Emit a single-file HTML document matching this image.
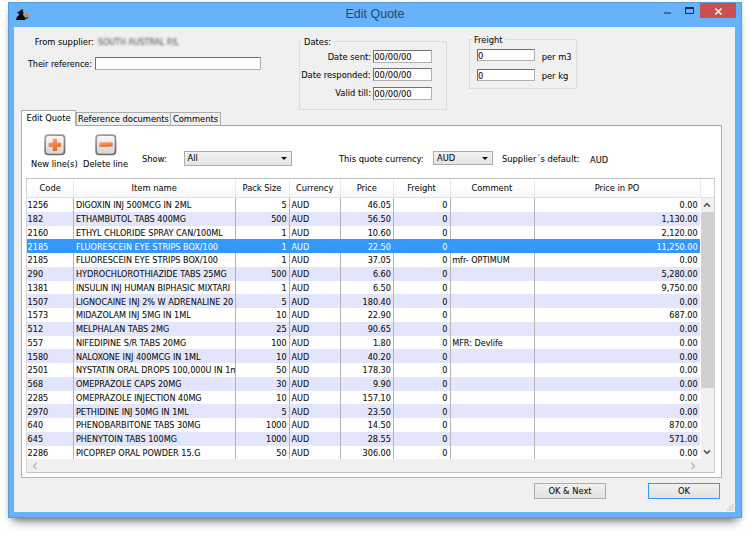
<!DOCTYPE html>
<html><head><meta charset="utf-8"><title>Edit Quote</title>
<style>
html,body{margin:0;padding:0;background:#fff;}
body{width:750px;height:533px;position:relative;overflow:hidden;font-family:"DejaVu Sans Condensed","DejaVu Sans","Liberation Sans",sans-serif;font-stretch:condensed;font-size:9.25px;color:#161616;text-shadow:0 0 0.5px rgba(20,20,20,.3);}
.abs{position:absolute;}
#shadow{position:absolute;left:8px;top:1.5px;width:734px;height:516.8px;box-shadow:0 8px 9px -5px rgba(0,0,0,.55),0 1px 5px rgba(0,0,0,.10);}
#win{position:absolute;left:8px;top:1.5px;width:734px;height:516.8px;background:#66b3fb;box-sizing:border-box;border:1px solid #5a9bd8;}
#title{text-shadow:none;position:absolute;left:8px;top:7.1px;width:734px;text-align:center;font-size:12.5px;line-height:15px;color:#27466b;font-family:"Liberation Sans",sans-serif;font-stretch:normal;}
#client{position:absolute;left:14.2px;top:26.5px;width:721.1px;height:485.8px;background:#f0f0f0;}
.lbl{position:absolute;white-space:nowrap;line-height:12px;}
.r{text-align:right;}
.inp{position:absolute;background:#fff;border:1px solid #b0b0b0;border-top-color:#707070;border-left-color:#707070;box-sizing:border-box;font-size:9.25px;line-height:12.4px;padding-left:0.3px;white-space:nowrap;overflow:hidden;}
.grp{position:absolute;border:1px solid #dcdcdc;box-sizing:border-box;}
.grp b{position:absolute;font-weight:normal;background:#f0f0f0;padding:0 2px;line-height:12px;white-space:nowrap;}
.tab{position:absolute;box-sizing:border-box;border:1px solid #acacac;border-bottom:none;background:#f0f0f0;text-align:center;white-space:nowrap;line-height:11px;}
.tab.act{background:#fff;z-index:3;}
#panel{position:absolute;left:21px;top:125.2px;width:701.3px;height:352.8px;background:#fff;border:1px solid #b2b2b2;border-top-color:#a4a4a4;box-sizing:border-box;}
.dd{position:absolute;box-sizing:border-box;border:1px solid #acacac;background:linear-gradient(#f2f2f2,#e4e4e4);line-height:12px;padding-left:4px;white-space:nowrap;}
.dd:after{content:"";position:absolute;right:3.8px;top:5px;border:3px solid transparent;border-top:3.4px solid #111;border-bottom:none;}
.ibtn{position:absolute;width:21px;height:21px;box-sizing:border-box;border:1.5px solid #8c8c8c;border-radius:3.5px;background:linear-gradient(#fbfbfb,#d9d9d9);}
#tbl{position:absolute;left:26px;top:177.6px;width:688.5px;height:295.5px;box-sizing:border-box;border:1px solid #c4c4c4;border-left-color:#d6d6d6;border-right-color:#d0d0d0;background:#fff;overflow:hidden;}
#thead{position:absolute;left:0;top:0;width:673px;height:19px;background:linear-gradient(#fff 40%,#f6f7f9);}
.h{position:absolute;top:3.4px;text-align:center;line-height:12px;white-space:nowrap;color:#222;}
.hs{position:absolute;top:0;width:1px;height:19px;background:#e3eaf3;}
.vs{position:absolute;top:19px;width:1px;height:261.4px;background:#b4b4b4;z-index:2;}
.row{position:absolute;left:0;width:673px;height:13.75px;}
.row.alt{background:#e3e5fc;}
.row.sel{background:#3397fb;color:#fff;z-index:3;text-shadow:0 0 0.5px rgba(255,255,255,.15);}
.c{position:absolute;top:1.1px;font-size:9px;line-height:13.75px;white-space:nowrap;overflow:hidden;box-sizing:border-box;padding:0 2.4px 0 2.5px;}
.c.l{text-align:left;}
.c.c0{padding-left:0.6px;}
.c.r{text-align:right;}
.btn{position:absolute;box-sizing:border-box;border:1px solid #acacac;background:linear-gradient(#f1f1f1,#e2e2e2);text-align:center;line-height:14px;white-space:nowrap;}
</style></head><body>
<div id="shadow"></div>
<div id="win"></div>
<div id="title">Edit Quote</div>
<!-- app icon -->
<svg class="abs" style="left:15px;top:8px" width="15" height="13" viewBox="15 8 15 13"><path d="M22.5 9 L23.6 13.2 L22.7 14.6 C23.6 15.6 24.6 16.6 25 17.8 L28.4 17.2 L28.3 18 L25.2 19 L25.2 19.9 L16 19.9 C16.2 17.6 17.6 15.9 19.4 14.8 L18.3 13.6 L17.2 12.6 Z" fill="#0a0a0a"/><circle cx="26.7" cy="14.8" r="2.15" fill="#ff7a0c"/></svg>
<!-- window controls -->
<div class="abs" style="left:700px;top:2.5px;width:36px;height:15.7px;background:#c9504f;"></div>
<svg class="abs" style="left:700px;top:2.5px" width="36" height="16" viewBox="0 0 36 16"><path d="M15.3 5.5 L21.5 11.5 M21.5 5.5 L15.3 11.5" stroke="#fff" stroke-width="1.55" fill="none"/></svg>
<div class="abs" style="left:684.7px;top:7.3px;width:9.3px;height:6.7px;border:1.1px solid #1d2c40;border-top-width:2.2px;box-sizing:border-box;"></div>
<div class="abs" style="left:664.2px;top:11.8px;width:7px;height:2.1px;background:#3e6d9e;"></div>
<div id="client"></div>

<!-- top form -->
<div class="lbl r" style="left:19px;width:75px;top:35.5px;">From supplier:</div>
<div class="lbl" style="left:98px;top:35.5px;color:#4a4a4a;filter:blur(1.25px);font-size:8.8px;text-shadow:none;">SOUTH AUSTRAL P/L</div>
<div class="lbl r" style="left:18px;width:74px;top:57.8px;font-size:8.95px;">Their reference:</div>
<div class="inp" style="left:95px;top:56.7px;width:166px;height:13.6px;"></div>

<div class="grp" style="left:299px;top:41.3px;width:148px;height:69.2px;"><b style="left:2px;top:-6.3px;">Dates:</b></div>
<div class="lbl r" style="left:300px;width:71px;top:51px;">Date sent:</div>
<div class="inp" style="left:373px;top:49.8px;width:59px;height:13px;">00/00/00</div>
<div class="lbl r" style="left:290px;width:80.5px;top:69px;">Date responded:</div>
<div class="inp" style="left:373px;top:68px;width:59px;height:13.3px;">00/00/00</div>
<div class="lbl r" style="left:300px;width:71px;top:86.6px;">Valid till:</div>
<div class="inp" style="left:373px;top:86.7px;width:59px;height:13.3px;">00/00/00</div>

<div class="grp" style="left:468.5px;top:39.3px;width:108.2px;height:49.8px;"><b style="left:2.5px;top:-6.5px;">Freight</b></div>
<div class="inp" style="left:476.7px;top:48.9px;width:58.4px;height:12.6px;">0</div>
<div class="lbl" style="left:541.7px;top:50.5px;">per m3</div>
<div class="inp" style="left:476.7px;top:68.8px;width:58.4px;height:12.7px;">0</div>
<div class="lbl" style="left:541.7px;top:70.4px;">per kg</div>

<!-- tabs -->
<div class="tab" style="left:76px;top:111.6px;width:95px;height:15px;">Reference documents</div>
<div class="tab" style="left:170px;top:111.6px;width:51px;height:15px;">Comments</div>
<div id="panel"></div>
<div class="tab act" style="left:21px;top:110px;width:55px;height:16.2px;line-height:13px;">Edit Quote</div>

<!-- toolbar -->
<svg class="abs" style="left:44px;top:133.6px" width="22" height="22" viewBox="0 0 22 22"><defs><linearGradient id="gb" x1="0" y1="0" x2="0" y2="1"><stop offset="0" stop-color="#fafafa"/><stop offset="1" stop-color="#d2d2d2"/></linearGradient><linearGradient id="gs" x1="0" y1="0" x2="0.3" y2="1"><stop offset="0" stop-color="#a2a2a2"/><stop offset="1" stop-color="#6c6c6c"/></linearGradient><linearGradient id="go" x1="0" y1="0" x2="0.4" y2="1"><stop offset="0" stop-color="#f7ab80"/><stop offset="1" stop-color="#e7682a"/></linearGradient></defs><rect x="1.1" y="1.1" width="19.4" height="19.4" rx="3.2" fill="url(#gb)" stroke="url(#gs)" stroke-width="1.7"/><path d="M8.7 4.6h4.3v4.1h4.1v4.3h-4.1v4.1H8.7v-4.1H4.6V8.7h4.1z" fill="url(#go)"/></svg>
<svg class="abs" style="left:95.2px;top:133.6px" width="22" height="22" viewBox="0 0 22 22"><rect x="1.1" y="1.1" width="19.4" height="19.4" rx="3.2" fill="url(#gb)" stroke="url(#gs)" stroke-width="1.7"/><path d="M4.4 8.2h13.2v4.2l-13.2 0.6z" fill="url(#go)"/></svg>
<div class="lbl" style="left:31px;top:158px;">New line(s)</div>
<div class="lbl" style="left:83px;top:158px;">Delete line</div>
<div class="lbl" style="left:142px;top:153.3px;">Show:</div>
<div class="dd" style="left:184px;top:151.2px;width:108px;height:14.4px;padding-left:2.5px;">All</div>
<div class="lbl" style="left:339px;top:153px;">This quote currency:</div>
<div class="dd" style="left:433px;top:151px;width:60px;height:14px;padding-left:3px;">AUD</div>
<div class="lbl" style="left:502px;top:153px;">Supplier´s default:</div>
<div class="lbl" style="left:590px;top:154px;">AUD</div>

<!-- table -->
<div id="tbl">
  <div id="thead"><span class="h" style="left:0px;width:46.400000000000006px">Code</span><span class="h" style="left:46.400000000000006px;width:161.6px">Item name</span><span class="h" style="left:208px;width:54px">Pack Size</span><span class="h" style="left:262px;width:51.30000000000001px">Currency</span><span class="h" style="left:313.3px;width:53.0px">Price</span><span class="h" style="left:366.3px;width:56.39999999999998px">Freight</span><span class="h" style="left:422.7px;width:84.30000000000001px">Comment</span><span class="h" style="left:507px;width:166px">Price in PO</span><i class="hs" style="left:46.400000000000006px"></i><i class="hs" style="left:208px"></i><i class="hs" style="left:262px"></i><i class="hs" style="left:313.3px"></i><i class="hs" style="left:366.3px"></i><i class="hs" style="left:422.7px"></i><i class="hs" style="left:507px"></i><i class="hs" style="left:673px"></i></div>
  <div class="abs" style="left:0;top:18.6px;width:688px;height:1px;background:#e0e0e0;"></div>
  <div class="row" style="top:19.60px"><span class="c l c0" style="left:0.0px;width:46.4px">1256</span><span class="c l" style="left:46.4px;width:161.6px">DIGOXIN INJ 500MCG IN 2ML</span><span class="c r" style="left:208.0px;width:54.0px">5</span><span class="c l" style="left:262.0px;width:51.3px">AUD</span><span class="c r" style="left:313.3px;width:53.0px">46.05</span><span class="c r" style="left:366.3px;width:56.4px">0</span><span class="c l" style="left:422.7px;width:84.3px"></span><span class="c r" style="left:507.0px;width:166.0px">0.00</span></div>
<div class="row alt" style="top:33.35px"><span class="c l c0" style="left:0.0px;width:46.4px">182</span><span class="c l" style="left:46.4px;width:161.6px">ETHAMBUTOL TABS 400MG</span><span class="c r" style="left:208.0px;width:54.0px">500</span><span class="c l" style="left:262.0px;width:51.3px">AUD</span><span class="c r" style="left:313.3px;width:53.0px">56.50</span><span class="c r" style="left:366.3px;width:56.4px">0</span><span class="c l" style="left:422.7px;width:84.3px"></span><span class="c r" style="left:507.0px;width:166.0px">1,130.00</span></div>
<div class="row" style="top:47.10px"><span class="c l c0" style="left:0.0px;width:46.4px">2160</span><span class="c l" style="left:46.4px;width:161.6px">ETHYL CHLORIDE SPRAY CAN/100ML</span><span class="c r" style="left:208.0px;width:54.0px">1</span><span class="c l" style="left:262.0px;width:51.3px">AUD</span><span class="c r" style="left:313.3px;width:53.0px">10.60</span><span class="c r" style="left:366.3px;width:56.4px">0</span><span class="c l" style="left:422.7px;width:84.3px"></span><span class="c r" style="left:507.0px;width:166.0px">2,120.00</span></div>
<div class="row alt sel" style="top:60.85px"><span class="c l c0" style="left:0.0px;width:46.4px">2185</span><span class="c l" style="left:46.4px;width:161.6px">FLUORESCEIN EYE STRIPS BOX/100</span><span class="c r" style="left:208.0px;width:54.0px">1</span><span class="c l" style="left:262.0px;width:51.3px">AUD</span><span class="c r" style="left:313.3px;width:53.0px">22.50</span><span class="c r" style="left:366.3px;width:56.4px">0</span><span class="c l" style="left:422.7px;width:84.3px"></span><span class="c r" style="left:507.0px;width:166.0px">11,250.00</span></div>
<div class="row" style="top:74.60px"><span class="c l c0" style="left:0.0px;width:46.4px">2185</span><span class="c l" style="left:46.4px;width:161.6px">FLUORESCEIN EYE STRIPS BOX/100</span><span class="c r" style="left:208.0px;width:54.0px">1</span><span class="c l" style="left:262.0px;width:51.3px">AUD</span><span class="c r" style="left:313.3px;width:53.0px">37.05</span><span class="c r" style="left:366.3px;width:56.4px">0</span><span class="c l" style="left:422.7px;width:84.3px">mfr- OPTIMUM</span><span class="c r" style="left:507.0px;width:166.0px">0.00</span></div>
<div class="row alt" style="top:88.35px"><span class="c l c0" style="left:0.0px;width:46.4px">290</span><span class="c l" style="left:46.4px;width:161.6px">HYDROCHLOROTHIAZIDE TABS 25MG</span><span class="c r" style="left:208.0px;width:54.0px">500</span><span class="c l" style="left:262.0px;width:51.3px">AUD</span><span class="c r" style="left:313.3px;width:53.0px">6.60</span><span class="c r" style="left:366.3px;width:56.4px">0</span><span class="c l" style="left:422.7px;width:84.3px"></span><span class="c r" style="left:507.0px;width:166.0px">5,280.00</span></div>
<div class="row" style="top:102.10px"><span class="c l c0" style="left:0.0px;width:46.4px">1381</span><span class="c l" style="left:46.4px;width:161.6px">INSULIN INJ HUMAN BIPHASIC MIXTARI</span><span class="c r" style="left:208.0px;width:54.0px">1</span><span class="c l" style="left:262.0px;width:51.3px">AUD</span><span class="c r" style="left:313.3px;width:53.0px">6.50</span><span class="c r" style="left:366.3px;width:56.4px">0</span><span class="c l" style="left:422.7px;width:84.3px"></span><span class="c r" style="left:507.0px;width:166.0px">9,750.00</span></div>
<div class="row alt" style="top:115.85px"><span class="c l c0" style="left:0.0px;width:46.4px">1507</span><span class="c l" style="left:46.4px;width:161.6px">LIGNOCAINE INJ 2% W ADRENALINE 20</span><span class="c r" style="left:208.0px;width:54.0px">5</span><span class="c l" style="left:262.0px;width:51.3px">AUD</span><span class="c r" style="left:313.3px;width:53.0px">180.40</span><span class="c r" style="left:366.3px;width:56.4px">0</span><span class="c l" style="left:422.7px;width:84.3px"></span><span class="c r" style="left:507.0px;width:166.0px">0.00</span></div>
<div class="row" style="top:129.60px"><span class="c l c0" style="left:0.0px;width:46.4px">1573</span><span class="c l" style="left:46.4px;width:161.6px">MIDAZOLAM INJ 5MG IN 1ML</span><span class="c r" style="left:208.0px;width:54.0px">10</span><span class="c l" style="left:262.0px;width:51.3px">AUD</span><span class="c r" style="left:313.3px;width:53.0px">22.90</span><span class="c r" style="left:366.3px;width:56.4px">0</span><span class="c l" style="left:422.7px;width:84.3px"></span><span class="c r" style="left:507.0px;width:166.0px">687.00</span></div>
<div class="row alt" style="top:143.35px"><span class="c l c0" style="left:0.0px;width:46.4px">512</span><span class="c l" style="left:46.4px;width:161.6px">MELPHALAN TABS 2MG</span><span class="c r" style="left:208.0px;width:54.0px">25</span><span class="c l" style="left:262.0px;width:51.3px">AUD</span><span class="c r" style="left:313.3px;width:53.0px">90.65</span><span class="c r" style="left:366.3px;width:56.4px">0</span><span class="c l" style="left:422.7px;width:84.3px"></span><span class="c r" style="left:507.0px;width:166.0px">0.00</span></div>
<div class="row" style="top:157.10px"><span class="c l c0" style="left:0.0px;width:46.4px">557</span><span class="c l" style="left:46.4px;width:161.6px">NIFEDIPINE S/R TABS 20MG</span><span class="c r" style="left:208.0px;width:54.0px">100</span><span class="c l" style="left:262.0px;width:51.3px">AUD</span><span class="c r" style="left:313.3px;width:53.0px">1.80</span><span class="c r" style="left:366.3px;width:56.4px">0</span><span class="c l" style="left:422.7px;width:84.3px">MFR: Devlife</span><span class="c r" style="left:507.0px;width:166.0px">0.00</span></div>
<div class="row alt" style="top:170.85px"><span class="c l c0" style="left:0.0px;width:46.4px">1580</span><span class="c l" style="left:46.4px;width:161.6px">NALOXONE INJ 400MCG IN 1ML</span><span class="c r" style="left:208.0px;width:54.0px">10</span><span class="c l" style="left:262.0px;width:51.3px">AUD</span><span class="c r" style="left:313.3px;width:53.0px">40.20</span><span class="c r" style="left:366.3px;width:56.4px">0</span><span class="c l" style="left:422.7px;width:84.3px"></span><span class="c r" style="left:507.0px;width:166.0px">0.00</span></div>
<div class="row" style="top:184.60px"><span class="c l c0" style="left:0.0px;width:46.4px">2501</span><span class="c l" style="left:46.4px;width:161.6px">NYSTATIN ORAL DROPS 100,000U IN 1m</span><span class="c r" style="left:208.0px;width:54.0px">50</span><span class="c l" style="left:262.0px;width:51.3px">AUD</span><span class="c r" style="left:313.3px;width:53.0px">178.30</span><span class="c r" style="left:366.3px;width:56.4px">0</span><span class="c l" style="left:422.7px;width:84.3px"></span><span class="c r" style="left:507.0px;width:166.0px">0.00</span></div>
<div class="row alt" style="top:198.35px"><span class="c l c0" style="left:0.0px;width:46.4px">568</span><span class="c l" style="left:46.4px;width:161.6px">OMEPRAZOLE CAPS 20MG</span><span class="c r" style="left:208.0px;width:54.0px">30</span><span class="c l" style="left:262.0px;width:51.3px">AUD</span><span class="c r" style="left:313.3px;width:53.0px">9.90</span><span class="c r" style="left:366.3px;width:56.4px">0</span><span class="c l" style="left:422.7px;width:84.3px"></span><span class="c r" style="left:507.0px;width:166.0px">0.00</span></div>
<div class="row" style="top:212.10px"><span class="c l c0" style="left:0.0px;width:46.4px">2285</span><span class="c l" style="left:46.4px;width:161.6px">OMEPRAZOLE INJECTION 40MG</span><span class="c r" style="left:208.0px;width:54.0px">10</span><span class="c l" style="left:262.0px;width:51.3px">AUD</span><span class="c r" style="left:313.3px;width:53.0px">157.10</span><span class="c r" style="left:366.3px;width:56.4px">0</span><span class="c l" style="left:422.7px;width:84.3px"></span><span class="c r" style="left:507.0px;width:166.0px">0.00</span></div>
<div class="row alt" style="top:225.85px"><span class="c l c0" style="left:0.0px;width:46.4px">2970</span><span class="c l" style="left:46.4px;width:161.6px">PETHIDINE INJ 50MG IN 1ML</span><span class="c r" style="left:208.0px;width:54.0px">5</span><span class="c l" style="left:262.0px;width:51.3px">AUD</span><span class="c r" style="left:313.3px;width:53.0px">23.50</span><span class="c r" style="left:366.3px;width:56.4px">0</span><span class="c l" style="left:422.7px;width:84.3px"></span><span class="c r" style="left:507.0px;width:166.0px">0.00</span></div>
<div class="row" style="top:239.60px"><span class="c l c0" style="left:0.0px;width:46.4px">640</span><span class="c l" style="left:46.4px;width:161.6px">PHENOBARBITONE TABS 30MG</span><span class="c r" style="left:208.0px;width:54.0px">1000</span><span class="c l" style="left:262.0px;width:51.3px">AUD</span><span class="c r" style="left:313.3px;width:53.0px">14.50</span><span class="c r" style="left:366.3px;width:56.4px">0</span><span class="c l" style="left:422.7px;width:84.3px"></span><span class="c r" style="left:507.0px;width:166.0px">870.00</span></div>
<div class="row alt" style="top:253.35px"><span class="c l c0" style="left:0.0px;width:46.4px">645</span><span class="c l" style="left:46.4px;width:161.6px">PHENYTOIN TABS 100MG</span><span class="c r" style="left:208.0px;width:54.0px">1000</span><span class="c l" style="left:262.0px;width:51.3px">AUD</span><span class="c r" style="left:313.3px;width:53.0px">28.55</span><span class="c r" style="left:366.3px;width:56.4px">0</span><span class="c l" style="left:422.7px;width:84.3px"></span><span class="c r" style="left:507.0px;width:166.0px">571.00</span></div>
<div class="row" style="top:267.10px"><span class="c l c0" style="left:0.0px;width:46.4px">2286</span><span class="c l" style="left:46.4px;width:161.6px">PICOPREP ORAL POWDER 15.G</span><span class="c r" style="left:208.0px;width:54.0px">50</span><span class="c l" style="left:262.0px;width:51.3px">AUD</span><span class="c r" style="left:313.3px;width:53.0px">306.00</span><span class="c r" style="left:366.3px;width:56.4px">0</span><span class="c l" style="left:422.7px;width:84.3px"></span><span class="c r" style="left:507.0px;width:166.0px">0.00</span></div>
  <i class="vs" style="left:46.400000000000006px"></i><i class="vs" style="left:208px"></i><i class="vs" style="left:262px"></i><i class="vs" style="left:313.3px"></i><i class="vs" style="left:366.3px"></i><i class="vs" style="left:422.7px"></i><i class="vs" style="left:507px"></i>
  <!-- v scrollbar -->
  <div class="abs" style="left:674px;top:19px;width:13px;height:261.4px;background:#f0f0f0;"></div>
  <div class="abs" style="left:674px;top:33.8px;width:13px;height:175.8px;background:#d0d0d0;"></div>
  <svg class="abs" style="left:673px;top:19px" width="14" height="14" viewBox="0 0 14 14"><path d="M4 8.6 L7 5.6 L10 8.6" stroke="#555" stroke-width="1.5" fill="none"/></svg>
  <svg class="abs" style="left:673px;top:266.4px" width="14" height="14" viewBox="0 0 14 14"><path d="M4 5.4 L7 8.4 L10 5.4" stroke="#555" stroke-width="1.5" fill="none"/></svg>
  <!-- h scrollbar -->
  <div class="abs" style="left:0;top:280.4px;width:688px;height:14px;background:#f0f0f0;"></div>
  <svg class="abs" style="left:2px;top:281.2px" width="12" height="12" viewBox="0 0 12 12"><path d="M7.5 3 L4.5 6 L7.5 9" stroke="#b5b5b5" stroke-width="1.2" fill="none"/></svg>
  <svg class="abs" style="left:660px;top:281.2px" width="12" height="12" viewBox="0 0 12 12"><path d="M4.5 3 L7.5 6 L4.5 9" stroke="#b5b5b5" stroke-width="1.2" fill="none"/></svg>
</div>

<!-- buttons -->
<div class="btn" style="left:534px;top:483px;width:72px;height:16px;">OK &amp; Next</div>
<div class="btn" style="left:648px;top:483px;width:72px;height:16px;border-color:#3399ff;">OK</div>
<!-- grip -->
<svg class="abs" style="left:726.6px;top:504.2px" width="7.4" height="7.4" viewBox="0 0 9 9"><g fill="#c9c9c9"><rect x="6" y="0" width="2" height="2"/><rect x="3" y="3" width="2" height="2"/><rect x="6" y="3" width="2" height="2"/><rect x="0" y="6" width="2" height="2"/><rect x="3" y="6" width="2" height="2"/><rect x="6" y="6" width="2" height="2"/></g></svg>
</body></html>
